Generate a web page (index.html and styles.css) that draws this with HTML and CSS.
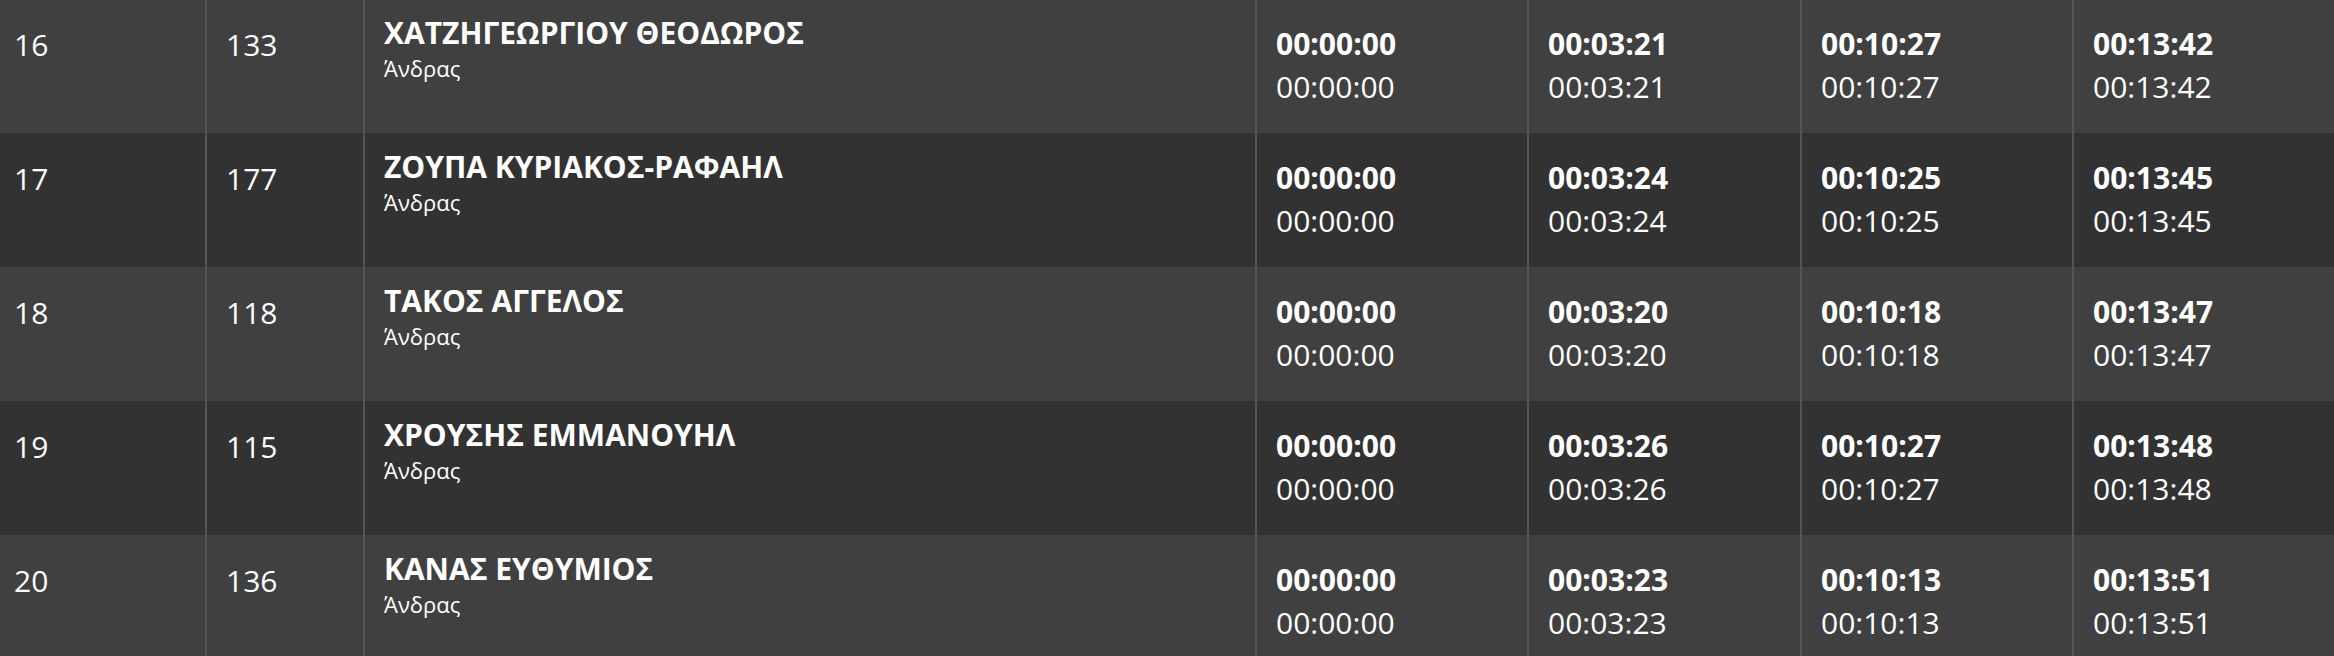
FILE: index.html
```html
<!DOCTYPE html>
<html lang="el">
<head>
<meta charset="utf-8">
<title>Αποτελέσματα</title>
<link rel="stylesheet" href="styles.css">
</head>
<body>
<div class="results">
  <div class="row light">
    <div class="cell pos">16</div>
    <div class="cell num">133</div>
    <div class="cell name"><div class="athlete">ΧΑΤΖΗΓΕΩΡΓΙΟΥ ΘΕΟΔΩΡΟΣ</div><div class="cat">Άνδρας</div></div>
    <div class="cell time"><b>00:00:00</b><span>00:00:00</span></div>
    <div class="cell time"><b>00:03:21</b><span>00:03:21</span></div>
    <div class="cell time"><b>00:10:27</b><span>00:10:27</span></div>
    <div class="cell time"><b>00:13:42</b><span>00:13:42</span></div>
  </div>
  <div class="row dark">
    <div class="cell pos">17</div>
    <div class="cell num">177</div>
    <div class="cell name"><div class="athlete">ΖΟΥΠΑ ΚΥΡΙΑΚΟΣ-ΡΑΦΑΗΛ</div><div class="cat">Άνδρας</div></div>
    <div class="cell time"><b>00:00:00</b><span>00:00:00</span></div>
    <div class="cell time"><b>00:03:24</b><span>00:03:24</span></div>
    <div class="cell time"><b>00:10:25</b><span>00:10:25</span></div>
    <div class="cell time"><b>00:13:45</b><span>00:13:45</span></div>
  </div>
  <div class="row light">
    <div class="cell pos">18</div>
    <div class="cell num">118</div>
    <div class="cell name"><div class="athlete">ΤΑΚΟΣ ΑΓΓΕΛΟΣ</div><div class="cat">Άνδρας</div></div>
    <div class="cell time"><b>00:00:00</b><span>00:00:00</span></div>
    <div class="cell time"><b>00:03:20</b><span>00:03:20</span></div>
    <div class="cell time"><b>00:10:18</b><span>00:10:18</span></div>
    <div class="cell time"><b>00:13:47</b><span>00:13:47</span></div>
  </div>
  <div class="row dark">
    <div class="cell pos">19</div>
    <div class="cell num">115</div>
    <div class="cell name"><div class="athlete">ΧΡΟΥΣΗΣ ΕΜΜΑΝΟΥΗΛ</div><div class="cat">Άνδρας</div></div>
    <div class="cell time"><b>00:00:00</b><span>00:00:00</span></div>
    <div class="cell time"><b>00:03:26</b><span>00:03:26</span></div>
    <div class="cell time"><b>00:10:27</b><span>00:10:27</span></div>
    <div class="cell time"><b>00:13:48</b><span>00:13:48</span></div>
  </div>
  <div class="row light">
    <div class="cell pos">20</div>
    <div class="cell num">136</div>
    <div class="cell name"><div class="athlete">ΚΑΝΑΣ ΕΥΘΥΜΙΟΣ</div><div class="cat">Άνδρας</div></div>
    <div class="cell time"><b>00:00:00</b><span>00:00:00</span></div>
    <div class="cell time"><b>00:03:23</b><span>00:03:23</span></div>
    <div class="cell time"><b>00:10:13</b><span>00:10:13</span></div>
    <div class="cell time"><b>00:13:51</b><span>00:13:51</span></div>
  </div>
</div>
</body>
</html>
```
FILE: styles.css
```css
html, body {
  margin: 0;
  padding: 0;
  background: #404040;
}
body {
  font-family: "Open Sans", "Noto Sans", sans-serif;
  color: #ffffff;
  overflow: hidden;
}
.results {
  margin-top: -1px;
}
.row {
  display: grid;
  grid-template-columns: 205px 158px 892px 272px 273px 272px 1fr;
  height: 134px;
}
.row.light { background: #404040; }
.row.dark { background: #323232; }
.cell {
  box-sizing: border-box;
  border-left: 2px solid #555555;
  padding: 23px 18px 0 19px;
  font-size: 30px;
  line-height: 43px;
}
.cell.pos,
.cell.num {
  padding-top: 24px;
}
.cell.pos {
  border-left: none;
  padding-left: 14px;
}
.cell.name {
  padding-top: 17px;
}
.athlete {
  font-size: 30px;
  font-weight: 700;
  line-height: 34px;
}
.cat {
  font-size: 22px;
  line-height: 37px;
}
.time b,
.time span {
  display: block;
}
.time b { font-weight: 700; }
.time span { font-weight: 400; }
```
